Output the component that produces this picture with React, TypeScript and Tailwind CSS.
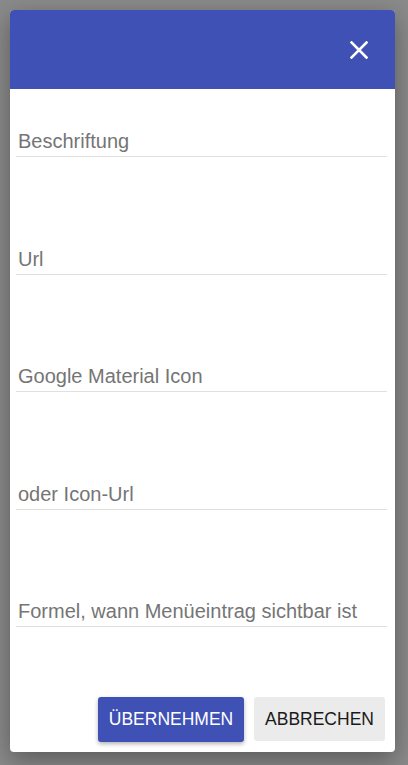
import React from "react";

const fields = [
  "Beschriftung",
  "Url",
  "Google Material Icon",
  "oder Icon-Url",
  "Formel, wann Menüeintrag sichtbar ist",
];

export default function App() {
  return (
    <div
      className="w-[408px] h-[765px] bg-[#8a8a8a] pt-[10px] pl-[10px]"
      style={{ fontFamily: '"Liberation Sans", Arial, sans-serif' }}
    >
      <div className="w-[385px] h-[742px] bg-white rounded-[4px] shadow-[0_8px_24px_rgba(0,0,0,0.35)] flex flex-col overflow-hidden">
        <div className="h-[79px] bg-[#3f51b5] flex items-center justify-end pr-[27px] shrink-0">
          <svg width="18" height="18" viewBox="0 0 18 18" className="mt-[1px]">
            <path d="M1.5 1.5 L16.5 16.5 M16.5 1.5 L1.5 16.5" stroke="#fff" strokeWidth="2.6" strokeLinecap="square" />
          </svg>
        </div>
        <div className="flex flex-col pl-[6px] pr-[8px]">
          {fields.map((f, i) => (
            <div
              key={f}
              className={`${i === 0 ? "mt-[40px]" : "mt-[89.5px]"} border-b border-[#e0e0e0] pb-[3px] pl-[2px] text-[20px] leading-[24px] text-[#757575]`}
            >
              {f}
            </div>
          ))}
        </div>
        <div className="flex-1" />
        <div className="flex justify-end gap-[10px] pr-[10px] pb-[10px]">
          <button className="h-[45px] w-[146px] bg-[#3f51b5] text-white text-[17.5px] rounded-[3px] shadow-[0_2px_4px_rgba(0,0,0,0.3)]">
            ÜBERNEHMEN
          </button>
          <button className="h-[44px] w-[131px] bg-[#ebebeb] text-[#1a1a1a] text-[17.5px] rounded-[3px]">
            ABBRECHEN
          </button>
        </div>
      </div>
    </div>
  );
}
